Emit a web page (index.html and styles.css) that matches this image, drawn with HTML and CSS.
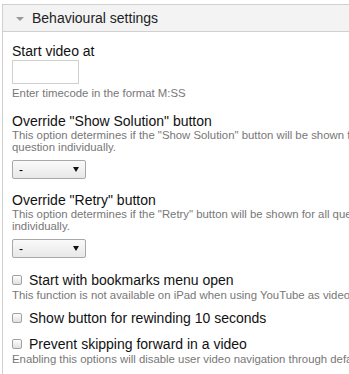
FILE: index.html
```html
<!DOCTYPE html>
<html>
<head>
<meta charset="utf-8">
<link rel="stylesheet" href="styles.css">
</head>
<body>
<div class="group">
  <div class="group-title"><span class="arrow"></span>Behavioural settings</div>
  <div class="group-body">
    <div class="field">
      <div class="label">Start video at</div>
      <input class="text-input" type="text">
      <div class="desc">Enter timecode in the format M:SS</div>
    </div>
    <div class="field">
      <div class="label">Override "Show Solution" button</div>
      <div class="desc">This option determines if the "Show Solution" button will be shown for all questions, disabled for all or configured for each question individually.</div>
      <div class="select"><span>-</span><span class="caret"></span></div>
    </div>
    <div class="field">
      <div class="label">Override "Retry" button</div>
      <div class="desc">This option determines if the "Retry" button will be shown for all questions, disabled for all or configured for each question individually.</div>
      <div class="select"><span>-</span><span class="caret"></span></div>
    </div>
    <div class="field check-field">
      <label class="check"><span class="box"></span>Start with bookmarks menu open</label>
      <div class="desc">This function is not available on iPad when using YouTube as video source.</div>
    </div>
    <div class="field check-field no-desc">
      <label class="check"><span class="box"></span>Show button for rewinding 10 seconds</label>
    </div>
    <div class="field check-field">
      <label class="check"><span class="box"></span>Prevent skipping forward in a video</label>
      <div class="desc">Enabling this options will disable user video navigation through default controls.</div>
    </div>
  </div>
</div>
</body>
</html>
```
FILE: styles.css
```css
html, body {
  margin: 0;
  padding: 0;
  background: #fff;
  overflow: hidden;
}
body {
  font-family: "Liberation Sans", Arial, sans-serif;
  color: #222;
  padding: 4px 0 0 2px;
}
.group {
  width: 700px;
  border: 1px solid #d0d0d0;
  border-right: none;
}
.group-title {
  height: 26px;
  background: #f3f3f3;
  border-bottom: 1px solid #d0d0d0;
  font-size: 14px;
  line-height: 26px;
  color: #222;
  display: flex;
  align-items: center;
  padding-left: 13px;
}
.arrow {
  width: 0;
  height: 0;
  border-left: 4px solid transparent;
  border-right: 4px solid transparent;
  border-top: 4px solid #999;
  margin-right: 8px;
  margin-top: 2px;
}
.group-body {
  padding: 12px 0 0 9px;
}
.field {
  margin-bottom: 14px;
}
.label {
  font-size: 14px;
  line-height: 15px;
  color: #111;
  white-space: nowrap;
}
.text-input {
  display: block;
  width: 67px;
  height: 24px;
  box-sizing: border-box;
  border: 1px solid #d0d0d0;
  margin: 1px 0 0;
  padding: 0;
}
.desc {
  font-size: 11.375px;
  line-height: 12px;
  color: #777;
  width: 640px;
}
.text-input + .desc {
  margin-top: 3px;
  line-height: 13px;
}
.label + .desc {
  margin-top: 0;
}
.select {
  width: 74px;
  height: 19px;
  box-sizing: border-box;
  border: 1px solid #a8a8a8;
  border-radius: 2px;
  background: linear-gradient(#fafafa, #e8e8e8);
  margin-top: 7px;
  display: flex;
  justify-content: space-between;
  align-items: center;
  padding: 0 6px 0 6px;
  font-size: 12px;
  color: #000;
}
.caret {
  width: 0;
  height: 0;
  border-left: 3px solid transparent;
  border-right: 3px solid transparent;
  border-top: 5px solid #111;
}
.check {
  display: flex;
  align-items: center;
  font-size: 14px;
  line-height: 16px;
  color: #111;
  white-space: nowrap;
}
.box {
  width: 8px;
  height: 8px;
  border: 1px solid #a0a0a0;
  border-radius: 2px;
  background: linear-gradient(#fdfdfd, #e0e0e0);
  margin: 0 7px 0 0;
}
.check-field .desc {
  margin-top: 1px;
  line-height: 13px;
  white-space: nowrap;
}
.check-field {
  margin-bottom: 8px;
}
.check-field.no-desc {
  margin-bottom: 10px;
}
```
